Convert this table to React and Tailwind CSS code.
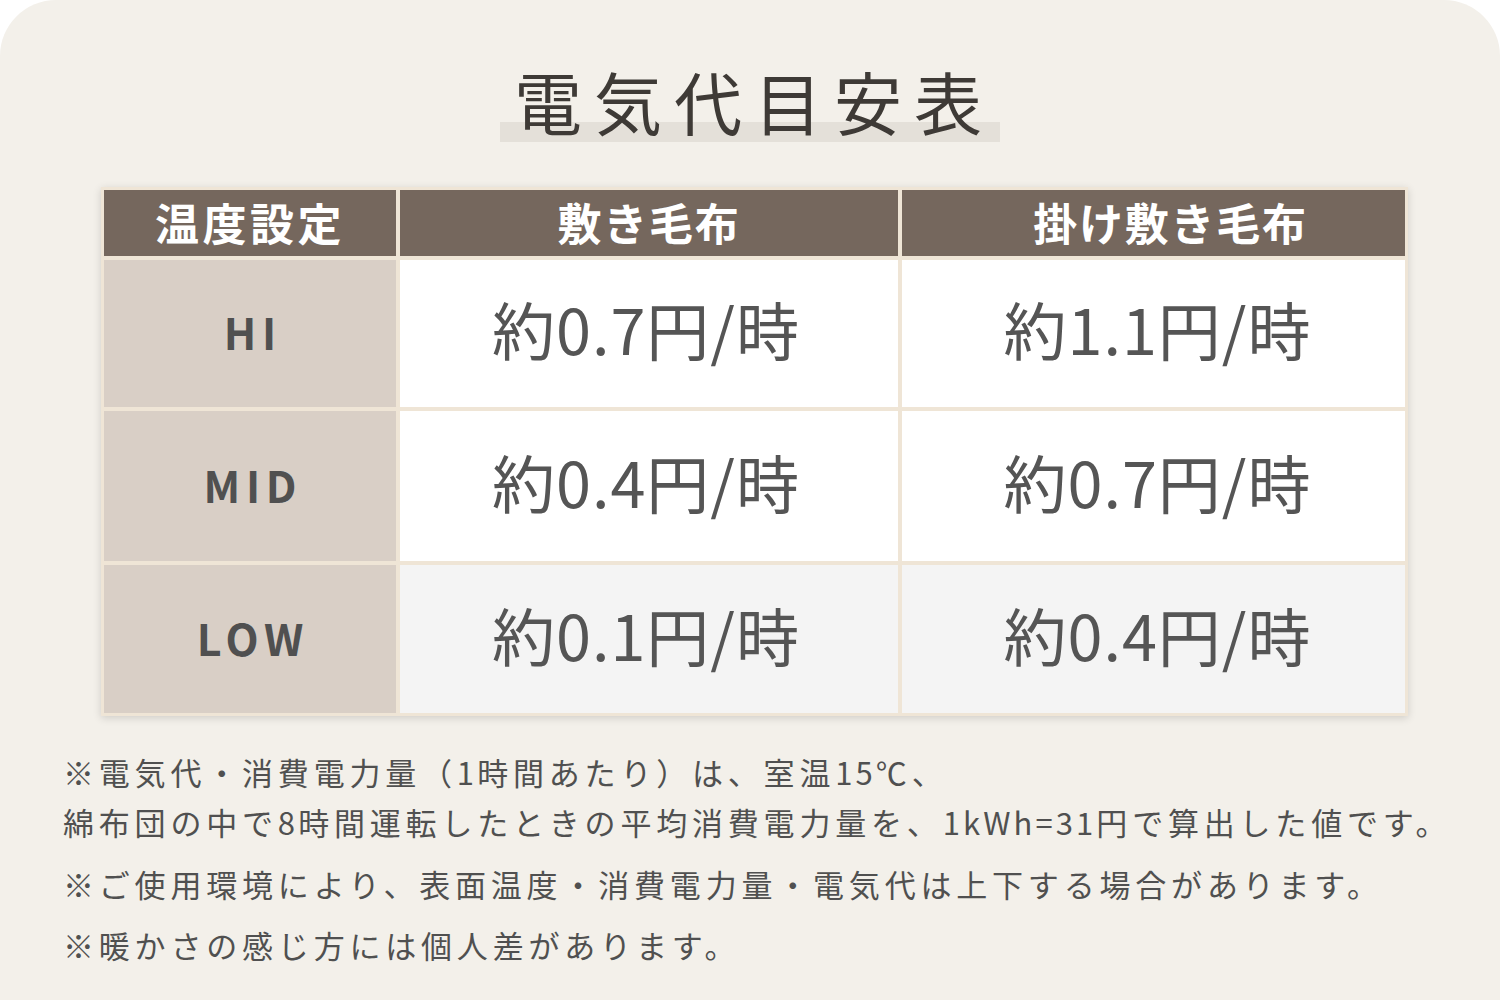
const rows = [
  { label: "HI", a: "約0.7円/時", b: "約1.1円/時", h: "h-[147px]", bg: "bg-white" },
  { label: "MID", a: "約0.4円/時", b: "約0.7円/時", h: "h-[150px]", bg: "bg-white" },
  { label: "LOW", a: "約0.1円/時", b: "約0.4円/時", h: "h-[148px]", bg: "bg-[#f4f4f4]" },
];

function PriceTable() {
  return (
    <div className="ml-[101px] w-[1307px] grid grid-cols-[292px_498px_1fr] gap-[4px] p-[3px] bg-[#efe5d6] shadow-[0_2px_8px_rgba(0,0,0,0.15)]">
      <div className="h-[66px] flex items-center justify-center pb-[3px] bg-[#75675d] text-white text-[44px] font-bold tracking-[0.08em] leading-none">
        温度設定
      </div>
      <div className="h-[66px] flex items-center justify-center pb-[3px] bg-[#75675d] text-white text-[44px] font-bold tracking-[0.04em] leading-none">
        敷き毛布
      </div>
      <div className="h-[66px] flex items-center justify-center pb-[3px] pl-[34px] bg-[#75675d] text-white text-[44px] font-bold tracking-[0.04em] leading-none">
        掛け敷き毛布
      </div>
      {rows.map((r) => (
        <Row key={r.label} row={r} />
      ))}
    </div>
  );
}

function Row({ row }) {
  return (
    <>
      <div className={`${row.h} flex items-center justify-center pb-[4px] bg-[#d9cfc6] text-[#505050] text-[43px] font-bold tracking-[0.13em] pl-[0.13em] leading-none`}>
        {row.label}
      </div>
      <div className={`${row.h} flex items-center justify-center pb-[12px] pr-[6px] ${row.bg} text-[#555555] text-[63px] tracking-[0.015em] leading-none`}>
        {row.a}
      </div>
      <div className={`${row.h} flex items-center justify-center pb-[12px] pl-[8px] ${row.bg} text-[#555555] text-[63px] tracking-[0.015em] leading-none`}>
        {row.b}
      </div>
    </>
  );
}

function Half({ children }) {
  return <span className="tracking-[0.1em]">{children}</span>;
}

export default function App() {
  return (
    <div className="min-h-screen bg-white font-['Noto_Sans_CJK_JP',sans-serif]">
      <div className="w-[1500px] h-[1000px] bg-[#f3f0ea] rounded-t-[56px] pt-[67px] overflow-hidden">
        <div className="flex justify-center">
          <h1 className="inline-block pl-[14px] pr-[6px] pb-[7px] text-[68px] leading-none font-normal tracking-[12px] text-[#3e3a36] bg-[linear-gradient(transparent_55px,#e4e0d9_55px)]">
            電気代目安表
          </h1>
        </div>

        <div className="mt-[45px]">
          <PriceTable />
        </div>

        <div className="mt-[31px] pl-[63px] text-[31px] leading-[50px] tracking-[0.155em] text-[#505050]">
          <p>
            ※電気代・消費電力量（<Half>1</Half>時間あたり）は、室温<Half>15</Half>℃、
          </p>
          <p>
            綿布団の中で<Half>8</Half>時間運転したときの平均消費電力量を、<Half>1kWh=31</Half>円で算出した値です。
          </p>
          <p className="mt-[12px]">※ご使用環境により、表面温度・消費電力量・電気代は上下する場合があります。</p>
          <p className="mt-[11px]">※暖かさの感じ方には個人差があります。</p>
        </div>
      </div>
    </div>
  );
}
